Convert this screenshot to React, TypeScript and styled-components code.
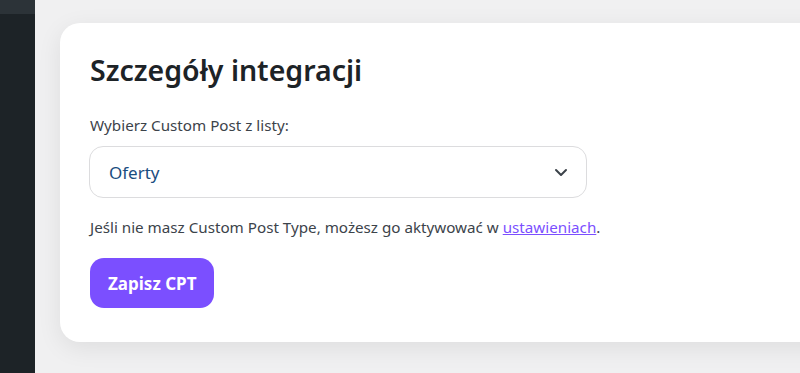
import React from "react";
import styled, { createGlobalStyle } from "styled-components";

const Global = createGlobalStyle`
  html, body { margin: 0; padding: 0; background: #f0f0f1; overflow: hidden; }
  body { font-family: "Noto Sans", "Open Sans", sans-serif; }
`;

const Page = styled.div`
  display: flex;
  width: 800px;
  height: 373px;
  overflow: hidden;
  background: #f0f0f1;
`;

const Sidebar = styled.div`
  flex: 0 0 35px;
  display: flex;
  flex-direction: column;
  background: #1d2327;
`;

const SidebarTop = styled.div`
  height: 14px;
  background: #2c3338;
`;

const Main = styled.div`
  flex: 1;
  padding: 23px 0 0 25px;
  min-width: 0;
`;

const Card = styled.div`
  width: 800px;
  box-sizing: border-box;
  background: #fff;
  border-radius: 20px;
  padding: 27px 30px 34px 30px;
  box-shadow: 0 6px 24px rgba(0, 0, 0, 0.08);
`;

const Title = styled.h2`
  margin: 0 0 25px 0;
  font-size: 28.5px;
  font-weight: 600;
  color: #1d2327;
  line-height: 40px;
`;

const Label = styled.label`
  display: block;
  font-size: 15.2px;
  color: #3c434a;
  margin-bottom: 11px;
  line-height: 20px;
`;

const SelectBox = styled.div`
  width: 498px;
  height: 52px;
  box-sizing: border-box;
  border: 1px solid #dcdcde;
  border-radius: 14px;
  display: flex;
  align-items: center;
  justify-content: space-between;
  padding: 0 18px 0 19px;
  font-size: 17px;
  color: #1a4d80;
  margin-left: -1px;
`;

const Help = styled.p`
  margin: 19px 0 21px 0;
  font-size: 15.2px;
  color: #3c434a;
  line-height: 20px;
`;

const Link = styled.a`
  color: #7b4fff;
  text-decoration: underline;
`;

const Button = styled.button`
  display: block;
  height: 50px;
  padding: 0 18px;
  border: none;
  border-radius: 14px;
  background: #7b4fff;
  color: #fff;
  font-family: inherit;
  font-size: 17px;
  font-weight: 700;
  cursor: pointer;
`;

export default function App() {
  return (
    <>
      <Global />
      <Page>
        <Sidebar>
          <SidebarTop />
        </Sidebar>
        <Main>
          <Card>
            <Title>Szczegóły integracji</Title>
            <Label>Wybierz Custom Post z listy:</Label>
            <SelectBox>
              <span>Oferty</span>
              <svg width="14" height="9" viewBox="0 0 14 9" fill="none">
                <path d="M2 2l5 5 5-5" stroke="#3c434a" strokeWidth="2" strokeLinecap="round" strokeLinejoin="round" />
              </svg>
            </SelectBox>
            <Help>
              Jeśli nie masz Custom Post Type, możesz go aktywować w <Link href="#">ustawieniach</Link>.
            </Help>
            <Button>Zapisz CPT</Button>
          </Card>
        </Main>
      </Page>
    </>
  );
}
